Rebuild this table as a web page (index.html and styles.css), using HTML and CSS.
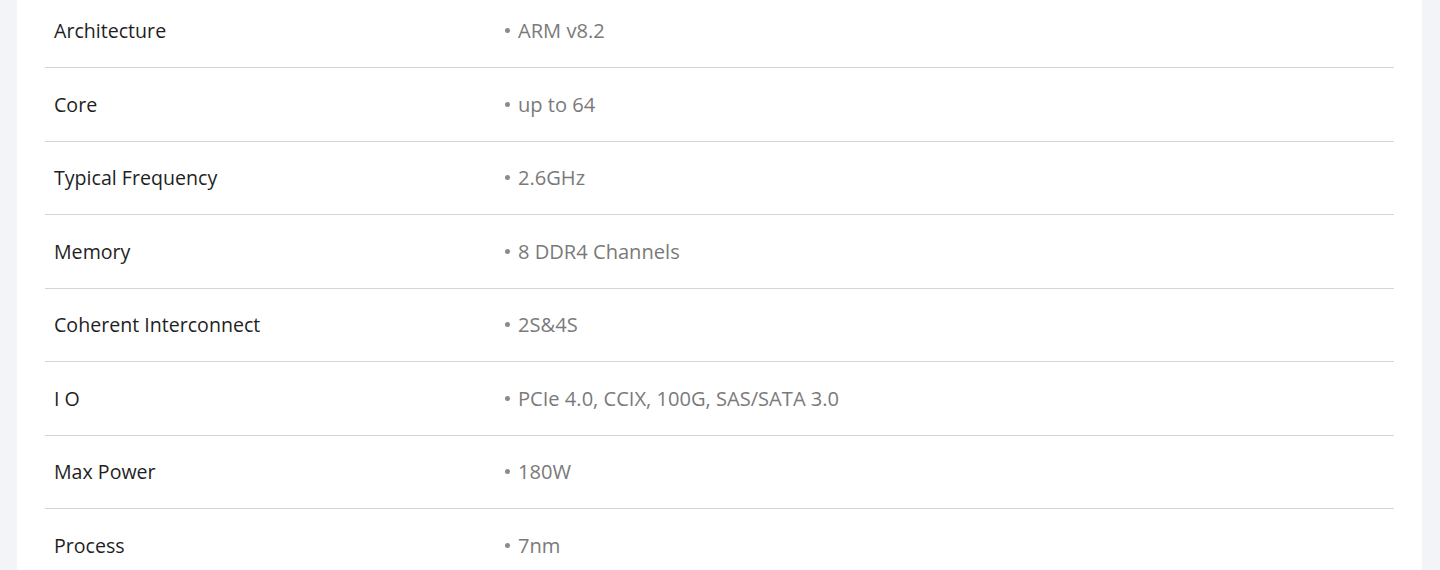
FILE: index.html
```html
<!DOCTYPE html>
<html>
<head>
<meta charset="utf-8">
<link rel="stylesheet" href="styles.css">
</head>
<body>
<div class="page">
  <div class="panel">
    <div class="specs">
      <div class="row"><div class="label">Architecture</div><div class="value">ARM v8.2</div></div>
      <div class="row"><div class="label">Core</div><div class="value">up to 64</div></div>
      <div class="row"><div class="label">Typical Frequency</div><div class="value">2.6GHz</div></div>
      <div class="row"><div class="label">Memory</div><div class="value">8 DDR4 Channels</div></div>
      <div class="row"><div class="label">Coherent Interconnect</div><div class="value">2S&amp;4S</div></div>
      <div class="row"><div class="label">I O</div><div class="value">PCIe 4.0, CCIX, 100G, SAS/SATA 3.0</div></div>
      <div class="row"><div class="label">Max Power</div><div class="value">180W</div></div>
      <div class="row"><div class="label">Process</div><div class="value">7nm</div></div>
    </div>
  </div>
</div>
</body>
</html>
```

FILE: styles.css
```css
html, body {
  margin: 0;
  padding: 0;
  background: #f3f4f8;
  overflow: hidden;
}
.page {
  height: 570px;
  padding: 0 18px 0 17px;
  background: #f3f4f8;
}
.panel {
  background: #ffffff;
  height: 100%;
  padding: 0 28px;
  overflow: hidden;
}
.specs {
  margin-top: -5.5px;
}
.row {
  display: flex;
  align-items: center;
  height: 73.5px;
  box-sizing: border-box;
  border-bottom: 1px solid #d4d4d4;
  font-family: "Open Sans", "Noto Sans", sans-serif;
}
.label {
  width: 459px;
  padding-left: 9px;
  box-sizing: border-box;
  color: #1f1f1f;
  font-size: 19.6px;
}
.value {
  color: #7a7a7a;
  display: flex;
  align-items: center;
  font-size: 20.1px;
}
.value::before {
  content: "";
  width: 5px;
  height: 5px;
  border-radius: 50%;
  background: #8a8a8a;
  margin-left: 1px;
  margin-right: 8px;
  flex: none;
}
```
